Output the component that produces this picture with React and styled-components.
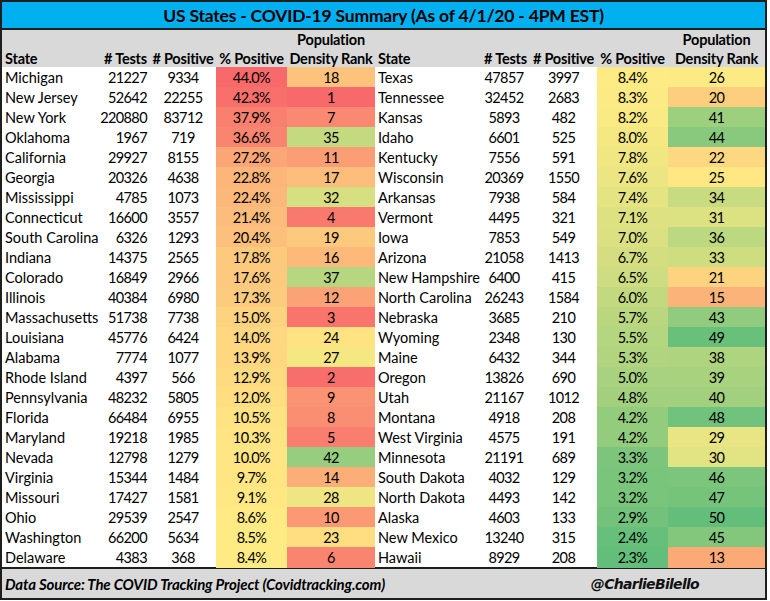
import React from "react";
import styled, { createGlobalStyle } from "styled-components";

const GlobalStyle = createGlobalStyle`
  html, body { margin: 0; padding: 0; background: #ffffff; }
  body { font-family: "Lato", "Liberation Sans", sans-serif; color: #000; }
`;

const left = [
  ["Michigan", 21227, 9334, 44.0, 18],
  ["New Jersey", 52642, 22255, 42.3, 1],
  ["New York", 220880, 83712, 37.9, 7],
  ["Oklahoma", 1967, 719, 36.6, 35],
  ["California", 29927, 8155, 27.2, 11],
  ["Georgia", 20326, 4638, 22.8, 17],
  ["Mississippi", 4785, 1073, 22.4, 32],
  ["Connecticut", 16600, 3557, 21.4, 4],
  ["South Carolina", 6326, 1293, 20.4, 19],
  ["Indiana", 14375, 2565, 17.8, 16],
  ["Colorado", 16849, 2966, 17.6, 37],
  ["Illinois", 40384, 6980, 17.3, 12],
  ["Massachusetts", 51738, 7738, 15.0, 3],
  ["Louisiana", 45776, 6424, 14.0, 24],
  ["Alabama", 7774, 1077, 13.9, 27],
  ["Rhode Island", 4397, 566, 12.9, 2],
  ["Pennsylvania", 48232, 5805, 12.0, 9],
  ["Florida", 66484, 6955, 10.5, 8],
  ["Maryland", 19218, 1985, 10.3, 5],
  ["Nevada", 12798, 1279, 10.0, 42],
  ["Virginia", 15344, 1484, 9.7, 14],
  ["Missouri", 17427, 1581, 9.1, 28],
  ["Ohio", 29539, 2547, 8.6, 10],
  ["Washington", 66200, 5634, 8.5, 23],
  ["Delaware", 4383, 368, 8.4, 6],
];

const right = [
  ["Texas", 47857, 3997, 8.4, 26],
  ["Tennessee", 32452, 2683, 8.3, 20],
  ["Kansas", 5893, 482, 8.2, 41],
  ["Idaho", 6601, 525, 8.0, 44],
  ["Kentucky", 7556, 591, 7.8, 22],
  ["Wisconsin", 20369, 1550, 7.6, 25],
  ["Arkansas", 7938, 584, 7.4, 34],
  ["Vermont", 4495, 321, 7.1, 31],
  ["Iowa", 7853, 549, 7.0, 36],
  ["Arizona", 21058, 1413, 6.7, 33],
  ["New Hampshire", 6400, 415, 6.5, 21],
  ["North Carolina", 26243, 1584, 6.0, 15],
  ["Nebraska", 3685, 210, 5.7, 43],
  ["Wyoming", 2348, 130, 5.5, 49],
  ["Maine", 6432, 344, 5.3, 38],
  ["Oregon", 13826, 690, 5.0, 39],
  ["Utah", 21167, 1012, 4.8, 40],
  ["Montana", 4918, 208, 4.2, 48],
  ["West Virginia", 4575, 191, 4.2, 29],
  ["Minnesota", 21191, 689, 3.3, 30],
  ["South Dakota", 4032, 129, 3.2, 46],
  ["North Dakota", 4493, 142, 3.2, 47],
  ["Alaska", 4603, 133, 2.9, 50],
  ["New Mexico", 13240, 315, 2.4, 45],
  ["Hawaii", 8929, 208, 2.3, 13],
];

const RED = [248, 105, 107];
const YEL = [255, 235, 132];
const GRN = [99, 190, 123];

const mix = (a, b, t) =>
  `rgb(${a.map((v, i) => Math.round(v + (b[i] - v) * t)).join(",")})`;

// high value -> red, low -> green (Excel 3-colour scale)
const scaleHighRed = (v, min, mid, max) =>
  v >= mid ? mix(YEL, RED, (v - mid) / (max - mid)) : mix(YEL, GRN, (mid - v) / (mid - min));

const pctColor = (v) => scaleHighRed(v, 2.3, 8.4, 44.0);
const rankColor = (r) => scaleHighRed(51 - r, 1, 25.5, 50);

const COLS = "98px 50px 66px 71px 88px 103px 52px 67px 71px 97px";

const Frame = styled.div`
  width: 763px;
  border: 2px solid #1e1e1e;
  background: #fff;
`;

const TitleBar = styled.div`
  height: 26px;
  background: #00b0f0;
  border-bottom: 2px solid #1e1e1e;
  display: flex;
  align-items: center;
  justify-content: center;
  font-weight: 700;
  font-size: 17.5px;
  letter-spacing: -0.2px;
`;

const HeaderRow = styled.div`
  display: grid;
  grid-template-columns: ${COLS};
  height: 37px;
  background: #d9d9d9;
  font-weight: 700;
  font-size: 14.5px;
  line-height: 19px;
`;

const HeadCell = styled.div`
  display: flex;
  flex-direction: column;
  justify-content: flex-end;
  align-items: ${(p) => (p.$align === "left" ? "flex-start" : p.$align === "right" ? "flex-end" : "center")};
  padding: 0 ${(p) => (p.$align === "right" ? "3px" : "0")} 0 ${(p) => (p.$align === "left" ? "3px" : "0")};
  white-space: nowrap;
  letter-spacing: -0.2px;
`;

const Body = styled.div`
  display: flex;
  flex-direction: column;
`;

const DataRow = styled.div`
  display: grid;
  grid-template-columns: ${COLS};
  height: 20px;
  font-size: 14.5px;
  line-height: 21px;
`;

const Cell = styled.div`
  background: ${(p) => p.$bg || "transparent"};
  text-align: ${(p) => p.$align || "center"};
  padding: 0 ${(p) => (p.$align === "right" ? "3px" : "0")} 0 ${(p) => (p.$align === "left" ? "3px" : "0")};
  white-space: nowrap;
  letter-spacing: ${(p) => (p.$num ? "-0.6px" : "0")};
`;

const Footer = styled.div`
  height: 29px;
  background: #d9d9d9;
  border-top: 2px solid #1e1e1e;
  display: flex;
  align-items: center;
  justify-content: space-between;
  padding: 0 66px 0 3px;
`;

const Source = styled.span`
  font-weight: 700;
  font-style: italic;
  font-size: 15px;
  letter-spacing: -0.15px;
`;

const Handle = styled.span`
  font-family: "DejaVu Sans", sans-serif;
  font-weight: 700;
  font-style: italic;
  font-size: 14px;
  letter-spacing: -0.7px;
  color: #111;
`;

const fmtPct = (v) => v.toFixed(1) + "%";

const Half = ({ row, testsAlign }) => {
  const [name, tests, pos, pct, rank] = row;
  return (
    <>
      <Cell $align="left">{name}</Cell>
      <Cell $align={testsAlign} $num>{tests}</Cell>
      <Cell $num>{pos}</Cell>
      <Cell $bg={pctColor(pct)} $num>{fmtPct(pct)}</Cell>
      <Cell $bg={rankColor(rank)} $num>{rank}</Cell>
    </>
  );
};

const HeadHalf = () => (
  <>
    <HeadCell $align="left">State</HeadCell>
    <HeadCell $align="right"># Tests</HeadCell>
    <HeadCell># Positive</HeadCell>
    <HeadCell>% Positive</HeadCell>
    <HeadCell>
      <span>Population</span>
      <span>Density Rank</span>
    </HeadCell>
  </>
);

export default function App() {
  return (
    <>
      <GlobalStyle />
      <Frame>
        <TitleBar>US States - COVID-19 Summary (As of 4/1/20 - 4PM EST)</TitleBar>
        <HeaderRow>
          <HeadHalf />
          <HeadHalf />
        </HeaderRow>
        <Body>
          {left.map((l, i) => (
            <DataRow key={l[0]}>
              <Half row={l} testsAlign="right" />
              <Half row={right[i]} />
            </DataRow>
          ))}
        </Body>
        <Footer>
          <Source>Data Source: The COVID Tracking Project (Covidtracking.com)</Source>
          <Handle>@CharlieBilello</Handle>
        </Footer>
      </Frame>
    </>
  );
}
